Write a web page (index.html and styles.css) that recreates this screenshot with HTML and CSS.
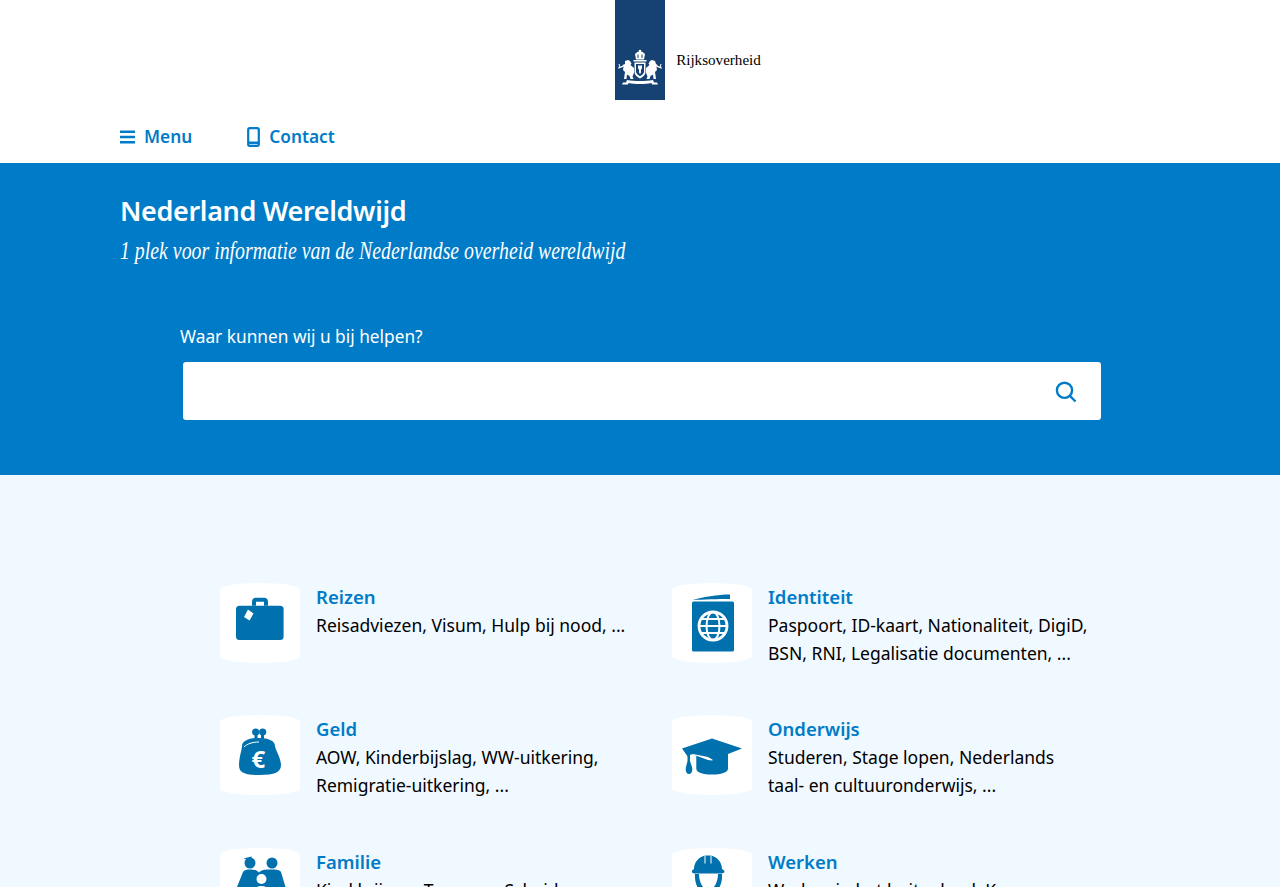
FILE: index.html
```html
<!DOCTYPE html>
<html lang="nl">

<head>
	<meta charset="utf-8">
	<title>Nederland Wereldwijd</title>
	<link rel="stylesheet" href="styles.css">
</head>

<body>
	<header class="site-header">
		<a class="logo" href="#">
			<span class="logo-bar">
				<svg class="logo-arms" viewBox="0 0 50 44" width="50" height="44" fill="#fff">
					<!-- crown -->
					<circle cx="25" cy="5" r="1.300" />
					<path d="M20 8c2-2 3.500-2.500 5-2.500S28 6 30 8l-1 5.500h-8z" />
					<path d="M22.500 8.500h1v3.500h-1zM26.500 8.500h1v3.500h-1z" fill="#154273" />
					<path d="M18.500 14h13v1.500h-13z" />
					<!-- shield -->
					<path d="M19.500 16.500h11V26c0 3-2.500 5-5.500 6.500-3-1.500-5.500-3.500-5.500-6.500z" />
					<path d="M21 18h8v7.500c0 2-2 3.500-4 4.800-2-1.300-4-2.800-4-4.800z" fill="#154273" />
					<path d="M23 19.500h4v3l-1 1v3l-1 1.500-1-1.500v-3l-1-1z" />
					<!-- lions -->
					<path d="M10 15l3-1 2 1 1.500 2.500-1 1.500 3.500 3v5l-1.500 3.500 1 2.500h-3l-1-3-2.500-1.500-.5 4.500H9l1-7-2-2 .5-3-1-2L10 18z" />
					<path d="M40 15l-3-1-2 1-1.500 2.500 1 1.500-3.500 3v5l1.500 3.500-1 2.500h3l1-3 2.500-1.500.5 4.500H41l-1-7 2-2-.5-3 1-2-1.500-1z" />
					<path d="M3 21.500l5-2 .5 1.200-5 2zM47 21.500l-5-2-.5 1.200 5 2zM3.500 18l1 0 .8 3h-1zM46.500 18l-1 0-.8 3h1z" />
					<!-- ribbon -->
					<path d="M12 34c4 .8 8 1 13 1s9-.2 13-1l1 2.500h3l1 2h-6l-.5-1.500c-3.500.7-7 1-11.500 1s-8-.3-11.500-1L13 38.500H7l1-2h3z" />
				</svg>
			</span>
			<span class="logo-text">Rijksoverheid</span>
		</a>
	</header>

	<nav class="main-nav">
		<a class="nav-link" href="#">
			<svg viewBox="0 0 16 16" width="16" height="16" fill="#007bc7">
				<path d="M0 1.500h15v2.400H0zM0 6.800h15v2.400H0zM0 12.100h15v2.400H0z" />
			</svg>
			Menu
		</a>
		<a class="nav-link" href="#">
			<svg viewBox="0 0 14 20" width="14" height="20" fill="none" stroke="#007bc7">
				<rect x="1.200" y="1.200" width="10.600" height="17.600" rx="1.500" stroke-width="2.200" />
				<path d="M1 15.800h11" stroke-width="2.600" />
			</svg>
			Contact
		</a>
	</nav>

	<section class="hero">
		<h1>Nederland Wereldwijd</h1>
		<p class="subtitle">1 plek voor informatie van de Nederlandse overheid wereldwijd</p>
		<form class="search">
			<label for="q">Waar kunnen wij u bij helpen?</label>
			<div class="search-box">
				<input type="text" id="q" name="q">
				<button type="button" aria-label="Zoeken">
					<svg viewBox="0 0 24 24" width="24" height="24" fill="none" stroke="#007bc7">
						<circle cx="10.500" cy="11.300" r="7.600" stroke-width="2.400" />
						<path d="M16 17l5.500 5.500" stroke-width="2.400" />
					</svg>
				</button>
			</div>
		</form>
	</section>

	<main class="topics">
		<a class="topic" href="#">
			<span class="topic-icon">
				<svg viewBox="0 0 80 80" width="80" height="80" fill="#0071ad">
					<path d="M32 22.700v-4c0-2.500 1.500-4 4-4h8c2.500 0 4 1.500 4 4v4h-4v-4h-8v4z" />
					<rect x="16" y="22.700" width="47.600" height="34.300" rx="3.500" />
					<path d="M28 26.500l5.500 4-4 7-5.500-3.500z" fill="#fff" />
				</svg>
			</span>
			<span class="topic-text">
				<strong>Reizen</strong>
				Reisadviezen, Visum, Hulp bij nood, ...
			</span>
		</a>
		<a class="topic" href="#">
			<span class="topic-icon">
				<svg viewBox="0 0 80 80" width="80" height="80" fill="#0071ad">
					<path d="M20.500 17c9-3 26-5.500 37.500-5.500v4.500c-12 0-27 .5-37.500 1z" />
					<rect x="20" y="18.500" width="42" height="50" rx="1.500" />
					<g fill="none" stroke="#fff" stroke-width="2">
						<circle cx="41" cy="43" r="14" stroke-width="2.800" />
						<ellipse cx="41" cy="43" rx="6.500" ry="14" />
						<path d="M27 43h28M30 36h22M30 50h22" />
					</g>
				</svg>
			</span>
			<span class="topic-text">
				<strong>Identiteit</strong>
				Paspoort, ID-kaart, Nationaliteit, DigiD,<br>BSN, RNI, Legalisatie documenten, ...
			</span>
		</a>
		<a class="topic" href="#">
			<span class="topic-icon">
				<svg viewBox="0 0 80 80" width="80" height="80" fill="#0071ad">
					<circle cx="35.700" cy="17" r="3.600" />
					<circle cx="42.700" cy="17" r="3.600" />
					<path d="M34.500 19h3v5h-3zM41 19h3v5h-3z" />
					<path d="M22 31c0-5 7-8 17-8s16 3 16 8c0 3 6 12 6 19 0 7-6 10-22 10S19 57 19 50c0-7 3-16 3-19z" />
					<path d="M24 32c3-3 8-5 15-5" fill="none" stroke="#fff" stroke-width="1" />
					<text class="euro" x="38.300" y="53" text-anchor="middle">€</text>
				</svg>
			</span>
			<span class="topic-text">
				<strong>Geld</strong>
				AOW, Kinderbijslag, WW-uitkering,<br>Remigratie-uitkering, ...
			</span>
		</a>
		<a class="topic" href="#">
			<span class="topic-icon">
				<svg viewBox="0 0 80 80" width="80" height="80" fill="#0071ad">
					<path d="M10 33.500L40 23.500l30 10-14 5.500v14.500c0 4-7 6-16 6s-15.700-2-15.700-6V40.500L21 39.500l15 5.500 4 .5 1-.5-5-3-15-3-3.500 1v4z" />
					<path d="M15.500 38h2.500v8l2 6c1 4-.5 7-3 7s-4-3-3-7l1.500-6z" />
				</svg>
			</span>
			<span class="topic-text">
				<strong>Onderwijs</strong>
				Studeren, Stage lopen, Nederlands<br>taal- en cultuuronderwijs, ...
			</span>
		</a>
		<a class="topic" href="#">
			<span class="topic-icon">
				<svg viewBox="0 0 80 80" width="80" height="80" fill="#0071ad">
					<circle cx="30" cy="15" r="5.500" />
					<path d="M23.500 10.500l8-2 .5 4z" />
					<circle cx="52" cy="15" r="5.500" />
					<path d="M23 24c1-2 4-2.500 7-2.500 4 0 7 .5 9 3 2-2.500 5-3 13-3 4 0 8 .5 9 2.500l6 20h-52z" />
					<circle cx="41.500" cy="31" r="5" fill="#fff" />
					<path d="M33 46c0-5 3-8 8.500-8s8.500 3 8.500 8z" fill="#fff" />
				</svg>
			</span>
			<span class="topic-text">
				<strong>Familie</strong>
				Kind krijgen, Trouwen, Scheiden, ...
			</span>
		</a>
		<a class="topic" href="#">
			<span class="topic-icon">
				<svg viewBox="0 0 80 80" width="80" height="80" fill="#0071ad">
					<path d="M22 21c0-7 5-12 11-13.500h6C45 9 50 14 50 21l2.300 1.500v2l-2.300 1H22l-2-1v-2z" />
					<path d="M32.500 7.500h1v8h-1zM38.500 7.500h1v8h-1z" fill="#fff" />
					<path d="M23 26c-.5 8 2 14 6 18l8 3 7-3c4-4 6.500-10 6-18h-4c0 6-2 11-5 14h-9c-3-3-5-8-5-14z" />
				</svg>
			</span>
			<span class="topic-text">
				<strong>Werken</strong>
				Werken in het buitenland, Kamer van ...
			</span>
		</a>
	</main>
</body>

</html>
```

FILE: styles.css
```css
* {
	box-sizing: border-box;
	margin: 0;
	padding: 0;
}

html,
body {
	height: 100%;
	overflow: hidden;
}

body {
	font-family: "Noto Sans", "Open Sans", sans-serif;
	font-size: 17.500px;
	line-height: 28px;
	color: #000;
	background: #f0f9ff;
}

a {
	color: inherit;
	text-decoration: none;
}

.site-header {
	background: white;
	display: flex;
	justify-content: center;
	height: 100px;
}

.logo {
	display: flex;
	margin-left: 96px;
}

.logo-bar {
	width: 50px;
	height: 100px;
	background: #154273;
	padding-top: 46px;
}

.logo-arms {
	display: block;
}

.logo-text {
	font-family: "Liberation Serif", serif;
	font-size: 15.100px;
	line-height: 20px;
	margin: 50px 0 0 11px;
}

.main-nav {
	background: white;
	height: 63px;
	padding: 23px 0 0 120px;
	display: flex;
	gap: 55px;
}

.nav-link {
	display: flex;
	align-items: center;
	gap: 8px;
	height: 28px;
	color: #007bc7;
	font-size: 17.300px;
	font-weight: 600;
}

.hero {
	background: #007bc7;
	color: white;
	height: 312px;
	padding: 31px 120px 0;
}

h1 {
	font-size: 27px;
	line-height: 34px;
	font-weight: 600;
	letter-spacing: -0.350px;
}

.subtitle {
	font-family: "Liberation Serif", serif;
	font-style: italic;
	font-size: 25px;
	line-height: 32px;
	margin-top: 7px;
	white-space: nowrap;
	transform: scaleX(0.793);
	transform-origin: left;
}

.search {
	margin: 56px 0 0 60px;
}

.search label {
	display: block;
	font-size: 17.300px;
	line-height: 28px;
	margin-bottom: 11px;
}

.search-box {
	display: flex;
	align-items: center;
	width: 918px;
	height: 58px;
	margin-left: 3px;
	background: white;
	border-radius: 3px;
}

.search-box input {
	flex: 1;
	height: 100%;
	border: none;
	outline: none;
	background: none;
}

.search-box button {
	display: flex;
	width: 56px;
	border: none;
	background: none;
	padding-left: 8.500px;
}

.topics {
	display: grid;
	grid-template-columns: 452px 452px;
	grid-auto-rows: 132.400px;
	padding: 108px 0 0 220px;
}

.topic {
	display: flex;
	gap: 16px;
}

.topic-icon {
	flex: none;
	width: 80px;
	height: 80px;
	background: white;
	border-radius: 50% / 8%;
}

.topic-icon svg {
	display: block;
}

.topic-text strong {
	display: block;
	color: #007bc7;
	font-size: 18.500px;
	font-weight: 600;
}

.euro {
	font-family: "Noto Sans", sans-serif;
	font-size: 24px;
	font-weight: 700;
	fill: white;
}
```
